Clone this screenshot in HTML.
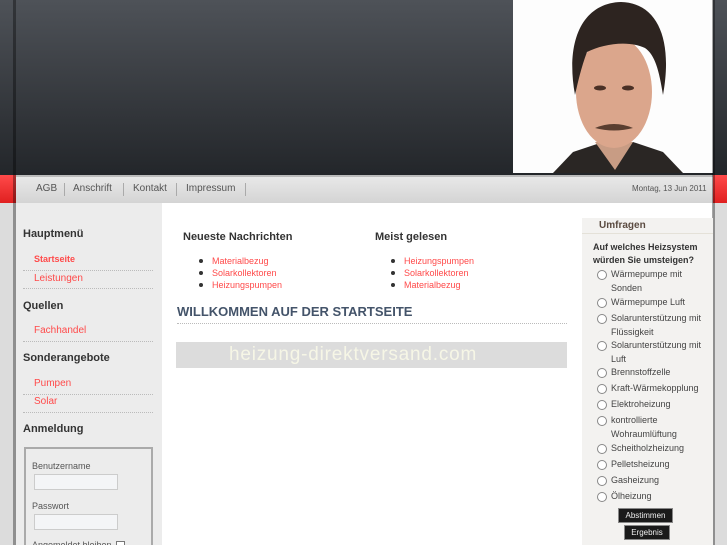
<!DOCTYPE html>
<html style="overflow:hidden;height:545px"><head><meta charset="utf-8"><style>
*{margin:0;padding:0;box-sizing:border-box}
body{width:727px;height:545px;overflow:hidden;position:relative;background:#dcdcdc;font-family:"Liberation Sans",sans-serif;}
.abs{position:absolute}
.hdr{left:0;top:0;width:727px;height:175px;background:linear-gradient(#4e5258,#23262a)}
.shl{left:13px;top:0;width:3px;height:545px;background:rgba(0,0,0,.35)}
.shr{left:712px;top:0;width:3px;height:545px;background:rgba(0,0,0,.35)}
.red{top:175px;height:28px;background:linear-gradient(#ff4a4a,#e02020)}
.nav{left:16px;top:175px;width:697px;height:28px;background:linear-gradient(#e8e8e8,#d4d4d4);border-top:2px solid #bbb;font-size:10px;color:#555}
.nav span{position:absolute;top:6px}
.sep{position:absolute;top:6px;width:1px;height:13px;background:#aaa}
.side{left:16px;top:203px;width:146px;height:342px;background:#ececec}
.main{left:162px;top:203px;width:551px;height:342px;background:#fff}
h3{position:absolute;font-size:11px;font-weight:bold;color:#333}
.lnk{position:absolute;font-size:10px;color:#ff4a4a}
.dot{position:absolute;height:1px;border-top:1px dotted #bbb}
ul{position:absolute;font-size:9px;color:#ff4a4a;line-height:12px;list-style:none}
ul li:before{content:"";display:inline-block;width:4px;height:4px;border-radius:2px;background:#333;margin:0 9px 1px -13px;vertical-align:middle}
.poll{left:582px;top:218px;width:131px;height:327px;background:#f3f2f0}
.opt{position:absolute;left:597px;font-size:9px;color:#444;line-height:14px}
.opt:before{content:"";position:absolute;left:0;top:3px;width:8px;height:8px;border:1px solid #888;border-radius:50%;background:#fff}
.opt span{display:block;padding-left:14px}
.btn{position:absolute;background:#1a1a1a;color:#eee;font-size:8px;text-align:center;line-height:13px;border:1px solid #888}
</style></head><body>
<div class="abs hdr"></div>
<div class="abs red" style="left:0;width:16px"></div>
<div class="abs red" style="left:713px;width:14px"></div>
<div class="abs" style="left:513px;top:0;width:200px;height:173px;background:#fdfdfd;overflow:hidden">
<svg width="200" height="173" viewBox="0 0 200 173">
<path d="M40 173 L60 152 L90 142 L120 142 L150 152 L170 173Z" fill="#2a2624"/>
<path d="M82 142 L102 170 L120 142Z" fill="#c89c84"/>
<ellipse cx="101" cy="92" rx="38" ry="56" fill="#dba68c"/>
<path d="M62 95 C52 40 70 3 108 2 C145 3 160 40 150 95 C146 70 142 55 132 48 C115 40 90 44 74 52 C68 68 65 82 62 95Z" fill="#2d2420"/>
<path d="M82 128 Q101 120 120 128 Q101 133 82 128Z" fill="#5a3e30"/>
<ellipse cx="87" cy="88" rx="6" ry="2.5" fill="#4a3026"/><ellipse cx="115" cy="88" rx="6" ry="2.5" fill="#4a3026"/>
</svg></div>
<div class="abs nav">
<span style="left:20px">AGB</span><div class="sep" style="left:48px"></div>
<span style="left:57px">Anschrift</span><div class="sep" style="left:107px"></div>
<span style="left:117px">Kontakt</span><div class="sep" style="left:160px"></div>
<span style="left:170px">Impressum</span><div class="sep" style="left:229px"></div>
<span style="left:616px;font-size:8px;top:7px">Montag, 13 Jun 2011</span>
</div>
<div class="abs side"></div>
<div class="abs main"></div>
<div class="abs shl"></div><div class="abs shr"></div>

<h3 style="left:23px;top:228px">Hauptmenü</h3>
<div class="lnk" style="left:34px;top:254px;font-weight:bold;font-size:9px">Startseite</div>
<div class="dot" style="left:23px;top:270px;width:130px"></div>
<div class="lnk" style="left:34px;top:273px">Leistungen</div>
<div class="dot" style="left:23px;top:288px;width:130px"></div>
<h3 style="left:23px;top:300px">Quellen</h3>
<div class="lnk" style="left:34px;top:325px">Fachhandel</div>
<div class="dot" style="left:23px;top:341px;width:130px"></div>
<h3 style="left:23px;top:352px">Sonderangebote</h3>
<div class="lnk" style="left:34px;top:378px">Pumpen</div>
<div class="dot" style="left:23px;top:394px;width:130px"></div>
<div class="lnk" style="left:34px;top:396px">Solar</div>
<div class="dot" style="left:23px;top:412px;width:130px"></div>
<h3 style="left:23px;top:423px">Anmeldung</h3>
<div class="abs" style="left:24px;top:447px;width:129px;height:110px;border:2px solid #aaa"></div>
<div class="abs" style="left:32px;top:461px;font-size:9px;color:#555">Benutzername</div>
<div class="abs" style="left:34px;top:474px;width:84px;height:16px;background:#f4f5f7;border:1px solid #ccc"></div>
<div class="abs" style="left:32px;top:501px;font-size:9px;color:#555">Passwort</div>
<div class="abs" style="left:34px;top:514px;width:84px;height:16px;background:#f4f5f7;border:1px solid #ccc"></div>
<div class="abs" style="left:32px;top:540px;font-size:9px;color:#555">Angemeldet bleiben</div>
<div class="abs" style="left:116px;top:541px;width:9px;height:9px;border:1px solid #777;background:#fff"></div>

<h3 style="left:183px;top:231px">Neueste Nachrichten</h3>
<ul style="left:212px;top:255px"><li>Materialbezug</li><li>Solarkollektoren</li><li>Heizungspumpen</li></ul>
<h3 style="left:375px;top:231px">Meist gelesen</h3>
<ul style="left:404px;top:255px"><li>Heizungspumpen</li><li>Solarkollektoren</li><li>Materialbezug</li></ul>
<div class="abs" style="left:177px;top:304px;font-size:13px;font-weight:bold;color:#44546a">WILLKOMMEN AUF DER STARTSEITE</div>
<div class="dot" style="left:177px;top:323px;width:390px"></div>
<div class="abs" style="left:176px;top:342px;width:391px;height:26px;background:#dcdcdc;color:#f6f6e6;font-size:19px;line-height:26px;padding-left:53px;letter-spacing:0.8px">heizung-direktversand.com</div>

<div class="abs poll"></div>
<div class="abs" style="left:582px;top:233px;width:131px;border-top:1px solid #e4e1d8"></div>
<div class="abs" style="left:599px;top:220px;font-size:10px;font-weight:bold;color:#5a4a40">Umfragen</div>
<div class="abs" style="left:593px;top:241px;font-size:9px;font-weight:bold;color:#333;line-height:13px">Auf welches Heizsystem<br>würden Sie umsteigen?</div>
<div class="opt" style="top:267px"><span>Wärmepumpe mit<br>Sonden</span></div>
<div class="opt" style="top:295px"><span>Wärmepumpe Luft</span></div>
<div class="opt" style="top:311px"><span>Solarunterstützung mit<br>Flüssigkeit</span></div>
<div class="opt" style="top:338px"><span>Solarunterstützung mit<br>Luft</span></div>
<div class="opt" style="top:365px"><span>Brennstoffzelle</span></div>
<div class="opt" style="top:381px"><span>Kraft-Wärmekopplung</span></div>
<div class="opt" style="top:397px"><span>Elektroheizung</span></div>
<div class="opt" style="top:413px"><span>kontrollierte<br>Wohraumlüftung</span></div>
<div class="opt" style="top:441px"><span>Scheitholzheizung</span></div>
<div class="opt" style="top:457px"><span>Pelletsheizung</span></div>
<div class="opt" style="top:473px"><span>Gasheizung</span></div>
<div class="opt" style="top:489px"><span>Ölheizung</span></div>
<div class="btn" style="left:618px;top:508px;width:55px">Abstimmen</div>
<div class="btn" style="left:624px;top:525px;width:46px">Ergebnis</div>
</body></html>
